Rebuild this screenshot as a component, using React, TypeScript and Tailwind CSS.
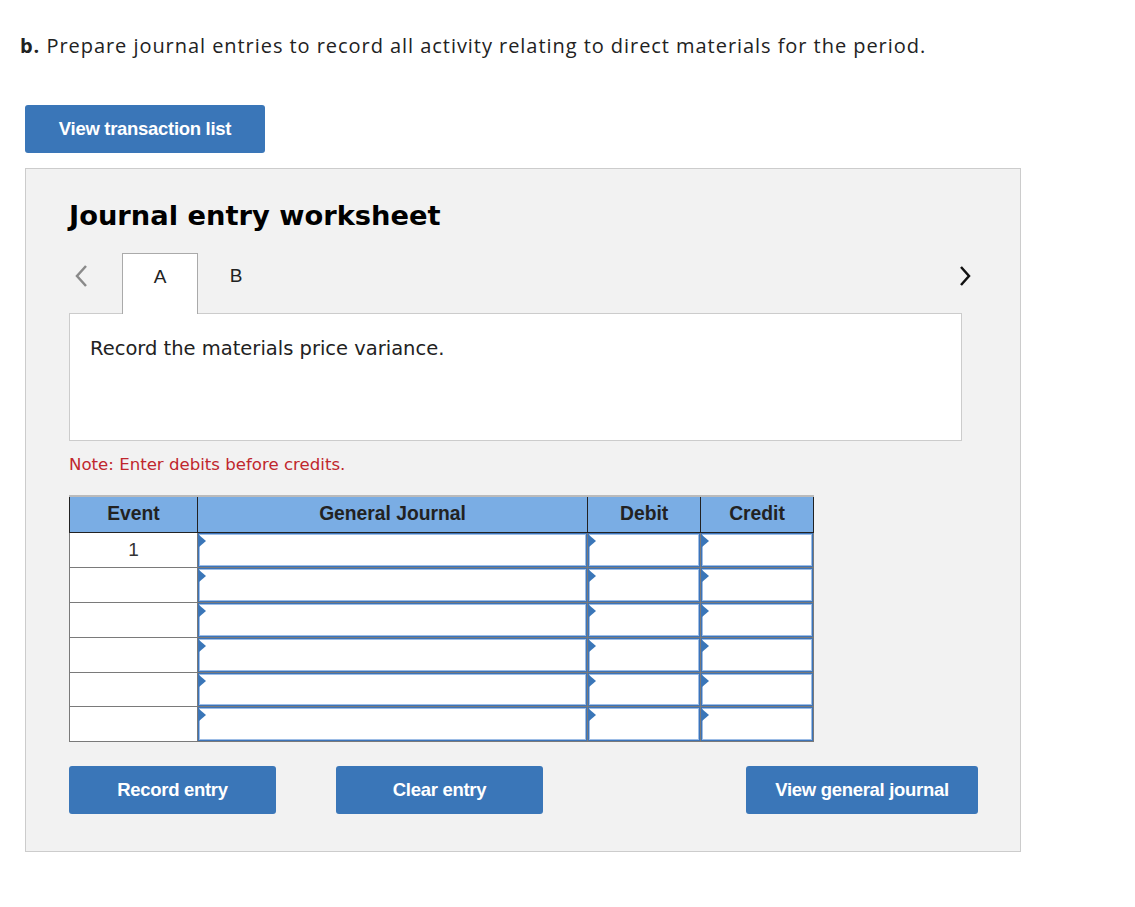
const rows = [1, 2, 3, 4, 5, 6];

function Flag() {
  return (
    <svg className="absolute left-0 top-[1px]" width="7" height="12" viewBox="0 0 7 12">
      <path d="M0 0 L7 6 L0 12 Z" fill="#3a76b8" />
    </svg>
  );
}

function InputCell() {
  return (
    <td className="h-[34.8px] border border-[#7a7a7a] p-0">
      <div className="relative h-full w-full border border-[#3d74b8]">
        <div className="h-full w-full border border-[#9dbde6] bg-white" />
        <Flag />
      </div>
    </td>
  );
}

export default function App() {
  const btn =
    "flex h-12 items-center justify-center rounded-[3px] bg-[#3a76b8] text-[18.5px] font-bold text-white tracking-[-0.3px] font-['Liberation_Sans',Arial,sans-serif]";
  return (
    <div className="min-h-screen bg-white font-['Open_Sans',sans-serif] text-[#222]">
      <div className="px-5 pt-[31px]">
        <p className="text-[20px] tracking-[0.95px] text-[#222]">
          <span className="font-bold">b.</span> Prepare journal entries to record all activity relating to direct materials for the period.
        </p>
      </div>
      <div className="px-[25px] pt-[44px]">
        <button className={`${btn} w-[240px]`}>View transaction list</button>
      </div>
      <div className="ml-[25px] mt-[15px] h-[684px] w-[996px] border border-[#cccccc] bg-[#f2f2f2] pl-[43px] font-['DejaVu_Sans',Verdana,sans-serif]">
        <h1 className="pt-[29px] text-[27.3px] font-bold leading-[36px] text-black">Journal entry worksheet</h1>
        <div className="mt-[19px] w-[893px]">
          <div className="flex h-[60px] items-end">
            <div className="flex h-full w-[53px] items-center pb-[14px] pl-[5px]">
              <svg width="14" height="24" viewBox="0 0 14 24">
                <path d="M12 2 L3 12 L12 22" fill="none" stroke="#8a8a8a" strokeWidth="2.5" />
              </svg>
            </div>
            <div className="relative -mb-px flex h-[61px] w-[76px] items-center justify-center border border-b-0 border-[#aaaaaa] bg-white pb-[14px] text-[19px] font-['Liberation_Sans',Arial,sans-serif]">
              A
            </div>
            <div className="flex h-full w-[76px] items-center justify-center pb-[14px] text-[19px] font-['Liberation_Sans',Arial,sans-serif]">
              B
            </div>
            <div className="flex-1" />
            <div className="-mr-[50px] flex h-full items-center pb-[14px] pr-[40px]">
              <svg width="14" height="22" viewBox="0 0 14 22">
                <path d="M3 2 L11 11 L3 20" fill="none" stroke="#111" strokeWidth="2.5" />
              </svg>
            </div>
          </div>
          <div className="h-[128px] border border-[#cccccc] bg-white px-5 pt-[20px] text-[19.5px] text-[#222]">
            Record the materials price variance.
          </div>
        </div>
        <p className="mt-[12px] text-[16.6px] text-[#c0272d]">Note: Enter debits before credits.</p>
        <table className="mt-[17px] w-[745px] border-collapse border-t-2 border-[#bbbbbb] font-['Liberation_Sans',Arial,sans-serif]">
          <thead>
            <tr className="h-[37px] bg-[#7aade4] text-[19.3px] font-bold text-[#222]">
              <th className="w-[128px] border border-[#222]">Event</th>
              <th className="w-[391px] border border-[#222]">General Journal</th>
              <th className="w-[113px] border border-[#222]">Debit</th>
              <th className="w-[113px] border border-[#222]">Credit</th>
            </tr>
          </thead>
          <tbody>
            {rows.map((r) => (
              <tr key={r} className="h-[34.8px]">
                <td className="border border-[#7a7a7a] bg-white p-0 text-center text-[19px] text-[#333]">{r === 1 ? "1" : ""}</td>
                <InputCell />
                <InputCell />
                <InputCell />
              </tr>
            ))}
          </tbody>
        </table>
        <div className="mt-[24px] flex w-[909px] items-center">
          <button className={`${btn} w-[207px]`}>Record entry</button>
          <button className={`${btn} ml-[60px] w-[207px]`}>Clear entry</button>
          <div className="flex-1" />
          <button className={`${btn} w-[232px]`}>View general journal</button>
        </div>
      </div>
    </div>
  );
}
